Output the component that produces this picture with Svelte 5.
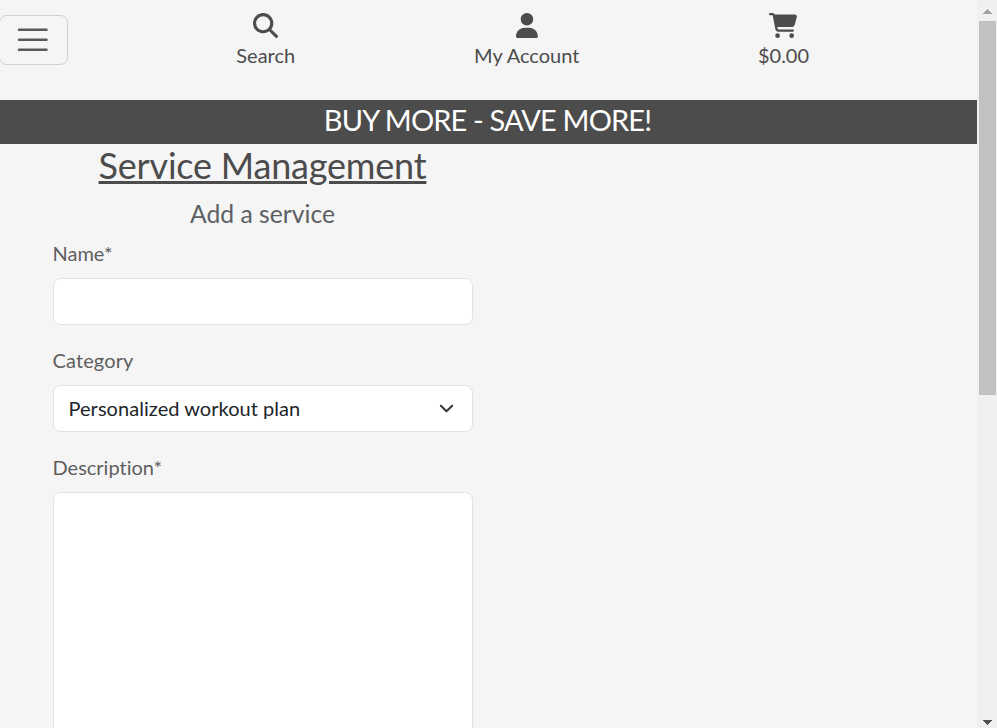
<script>
  let name = $state('');
  let description = $state('');
  const categories = ['Personalized workout plan'];
  const links = [
    {
      label: 'Search',
      width: 512,
      path: 'M416 208c0 45.900-14.900 88.300-40 122.700L502.600 457.400c12.500 12.500 12.500 32.800 0 45.300s-32.800 12.500-45.300 0L330.700 376c-34.400 25.200-76.800 40-122.700 40C93.100 416 0 322.900 0 208S93.100 0 208 0S416 93.100 416 208zM208 352a144 144 0 1 0 0-288 144 144 0 1 0 0 288z'
    },
    {
      label: 'My Account',
      width: 448,
      path: 'M224 256A128 128 0 1 0 224 0a128 128 0 1 0 0 256zm-45.700 48C79.800 304 0 383.800 0 482.300C0 498.700 13.300 512 29.700 512H418.300c16.400 0 29.700-13.300 29.700-29.700C448 383.800 368.200 304 269.700 304H178.300z'
    },
    {
      label: '$0.00',
      width: 576,
      path: 'M0 24C0 10.700 10.700 0 24 0H69.500c22 0 41.500 12.800 50.600 32h411c26.300 0 45.500 25 38.600 50.400l-41 152.300c-8.500 31.400-37 53.300-69.500 53.300H170.700l5.400 28.500c2.200 11.300 12.100 19.500 23.600 19.500H488c13.300 0 24 10.700 24 24s-10.700 24-24 24H199.700c-34.600 0-64.300-24.600-70.700-58.500L77.400 54.500c-.7-3.800-4-6.500-7.900-6.500H24C10.700 48 0 37.300 0 24zM128 464a48 48 0 1 1 96 0 48 48 0 1 1-96 0zm336-48a48 48 0 1 1 0 96 48 48 0 1 1 0-96z'
    }
  ];
</script>

<div class="window">
  <div class="page">
    <header>
      <button class="toggler" aria-label="Toggle navigation">
        <svg viewBox="0 0 30 30"><path d="M4 7h22M4 15h22M4 23h22" /></svg>
      </button>
      {#each links as link}
        <a href="#top">
          <svg viewBox="0 0 {link.width} 512"><path d={link.path} /></svg>
          <span>{link.label}</span>
        </a>
      {/each}
    </header>
    <div class="banner">BUY MORE - SAVE MORE!</div>
    <main>
      <h1>Service Management</h1>
      <h2>Add a service</h2>
      <form>
        <label for="name">Name*</label>
        <input id="name" bind:value={name} />
        <label for="category">Category</label>
        <div class="select">
          <select id="category">
            {#each categories as category}<option>{category}</option>{/each}
          </select>
          <svg viewBox="0 0 16 16"><path d="m2 5 6 6 6-6" /></svg>
        </div>
        <label for="description">Description*</label>
        <textarea id="description" bind:value={description}></textarea>
      </form>
    </main>
  </div>
  <div class="scrollbar">
    <svg class="up" viewBox="0 0 9 5" shape-rendering="crispEdges"><path d="M4 0h1v1h1v1h1v1h1v1h1v1H0V4h1V3h1V2h1V1h1z" /></svg>
    <div class="thumb"></div>
    <svg class="down" viewBox="0 0 9 5" shape-rendering="crispEdges"><path d="M0 0h9v1H8v1H7v1H6v1H5v1H4V4H3V3H2V2H1V1H0z" /></svg>
  </div>
</div>

<style>
  :global(body) {
    margin: 0;
    overflow: hidden;
  }
  .window {
    display: flex;
    height: 728px;
    overflow: hidden;
    background: #f5f5f5;
    color: #4c4c4c;
    font: 20px/28px Lato, sans-serif;
    font-variant-ligatures: none;
  }
  .window * {
    box-sizing: border-box;
  }
  .page {
    width: 977px;
    overflow: hidden;
  }
  header {
    display: grid;
    grid-template-columns: 150px 231.500px 290.500px 223px;
    height: 100px;
  }
  .toggler {
    width: 69.500px;
    height: 49.500px;
    margin: 15.250px 0 0 -1.500px;
    padding: 5px 14px;
    border: 1px solid #d0d0d0;
    border-radius: 7.500px;
    background: transparent;
  }
  .toggler svg {
    display: block;
    width: 37.500px;
    height: 37.500px;
    fill: none;
    stroke: #212529;
    stroke-opacity: .75;
    stroke-width: 2;
    stroke-linecap: round;
  }
  header a {
    display: flex;
    flex-direction: column;
    align-items: center;
    padding-top: 13px;
    color: inherit;
    text-decoration: none;
  }
  header a svg {
    height: 25px;
    margin-bottom: 3px;
    fill: currentColor;
  }
  .banner {
    height: 44px;
    background: #4c4c4c;
    color: #fff;
    font-size: 29px;
    letter-spacing: -.850px;
    line-height: 40px;
    text-align: center;
    padding-right: 2px;
  }
  main {
    width: 420px;
    margin-left: 52.500px;
  }
  h1, h2 {
    margin: 0;
    text-align: center;
    font-weight: 400;
  }
  h1 {
    height: 48px;
    font-size: 36px;
    letter-spacing: -.200px;
    line-height: 42px;
    text-decoration: underline;
    text-decoration-thickness: 3px;
  }
  h2 {
    height: 47px;
    font-size: 24.700px;
    line-height: 43px;
    color: #5c5f62;
  }
  form {
    display: flex;
    flex-direction: column;
  }
  label {
    height: 39px;
    color: #5e5e5e;
  }
  label[for='category'] {
    letter-spacing: .120px;
  }
  input, select, textarea {
    display: block;
    width: 100%;
    height: 47px;
    margin: 0;
    padding: 7px 15px 9px;
    border: 1px solid #dee2e6;
    border-radius: 7.500px;
    background: #fff;
    color: #212529;
    font: inherit;
    letter-spacing: .040px;
    outline: none;
    appearance: none;
  }
  input, .select {
    margin-bottom: 21px;
  }
  .select {
    position: relative;
  }
  .select svg {
    position: absolute;
    right: 18.500px;
    top: 16px;
    width: 15px;
    height: 15px;
    fill: none;
    stroke: #343a40;
    stroke-width: 2.200;
    stroke-linecap: round;
    stroke-linejoin: round;
    pointer-events: none;
  }
  textarea {
    height: 300px;
    resize: none;
  }
  .scrollbar {
    display: flex;
    flex-direction: column;
    width: 20px;
    padding: 9px 1px 3px 2px;
    background: #f0f0f0;
  }
  .scrollbar svg {
    width: 9px;
    height: 5px;
    margin-left: 4px;
  }
  .up {
    fill: #a3a3a3;
  }
  .thumb {
    height: 374px;
    margin-top: 7px;
    background: #c1c1c1;
  }
  .down {
    margin-top: auto;
    fill: #505050;
  }
</style>
